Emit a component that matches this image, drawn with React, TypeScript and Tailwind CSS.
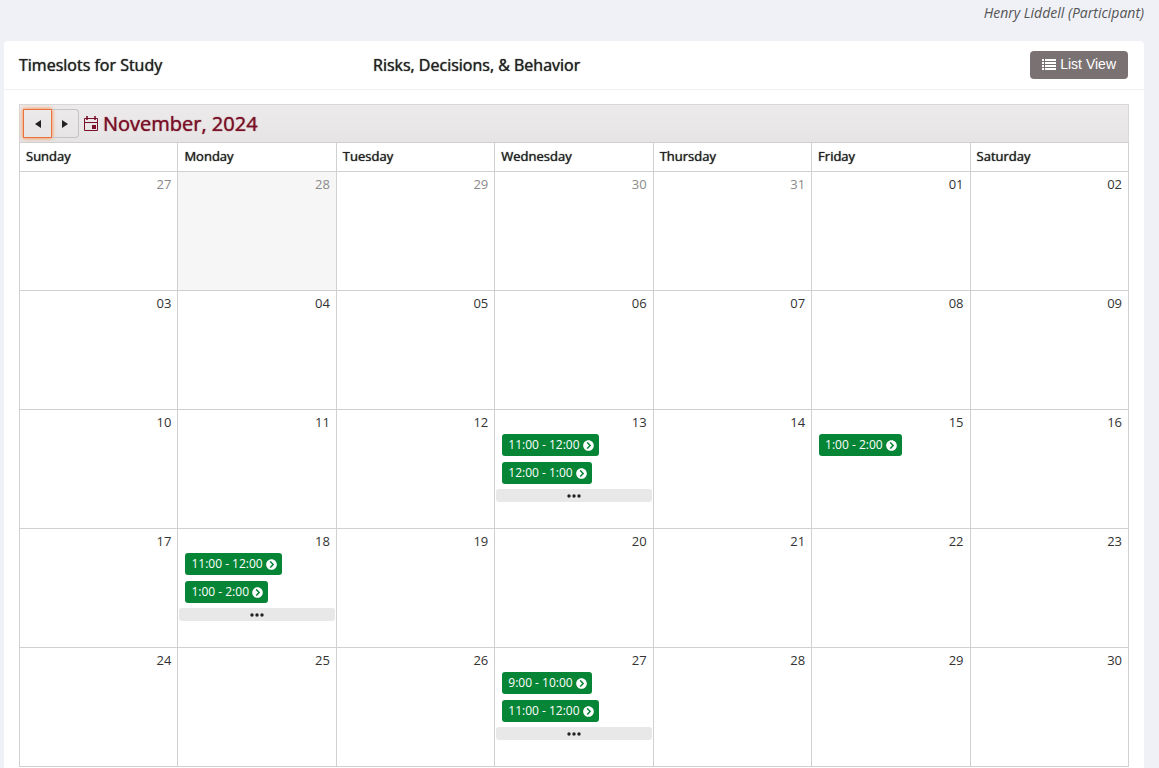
import React from 'react';
import { FaChevronCircleRight } from 'react-icons/fa';

type Day = {
  label: string;
  outside?: boolean;
  highlighted?: boolean;
  slots?: string[];
  more?: boolean;
};

const WEEKDAYS = ['Sunday', 'Monday', 'Tuesday', 'Wednesday', 'Thursday', 'Friday', 'Saturday'];

const WEEKS: Day[][] = [
  [
    { label: '27', outside: true },
    { label: '28', outside: true, highlighted: true },
    { label: '29', outside: true },
    { label: '30', outside: true },
    { label: '31', outside: true },
    { label: '01' },
    { label: '02' },
  ],
  [
    { label: '03' },
    { label: '04' },
    { label: '05' },
    { label: '06' },
    { label: '07' },
    { label: '08' },
    { label: '09' },
  ],
  [
    { label: '10' },
    { label: '11' },
    { label: '12' },
    { label: '13', slots: ['11:00 - 12:00', '12:00 - 1:00'], more: true },
    { label: '14' },
    { label: '15', slots: ['1:00 - 2:00'] },
    { label: '16' },
  ],
  [
    { label: '17' },
    { label: '18', slots: ['11:00 - 12:00', '1:00 - 2:00'], more: true },
    { label: '19' },
    { label: '20' },
    { label: '21' },
    { label: '22' },
    { label: '23' },
  ],
  [
    { label: '24' },
    { label: '25' },
    { label: '26' },
    { label: '27', slots: ['9:00 - 10:00', '11:00 - 12:00'], more: true },
    { label: '28' },
    { label: '29' },
    { label: '30' },
  ],
];

const ListIcon = () => (
  <svg viewBox="0 0 14 11" className="h-[11px] w-[14px] shrink-0" fill="currentColor" aria-hidden="true">
    {[0, 3, 6, 9].map((y) => (
      <g key={y}>
        <rect x="0" y={y} width="2" height="2" />
        <rect x="3" y={y} width="11" height="2" />
      </g>
    ))}
  </svg>
);

const CalendarIcon = () => (
  <svg viewBox="0 0 16 16" className="size-4 shrink-0" fill="none" stroke="currentColor" aria-hidden="true">
    <path d="M1.5 2.5h13v12h-13zM1.5 6.5h13" />
    <path d="M4 0v4M12 0v4" strokeWidth="1.6" />
    <path d="M9 9h4v4H9z" fill="currentColor" stroke="none" />
  </svg>
);

const DotsIcon = () => (
  <svg viewBox="0 0 14 4" className="h-1 w-[14px]" fill="currentColor" aria-hidden="true">
    <circle cx="2" cy="2" r="1.7" />
    <circle cx="7" cy="2" r="1.7" />
    <circle cx="12" cy="2" r="1.7" />
  </svg>
);

const Slot: React.FC<{ time: string }> = ({ time }) => (
  <a
    href="#"
    className="flex h-[22px] items-center gap-[3px] rounded-[3px] bg-[#078536] pr-[5px] pl-1.5 text-xs whitespace-nowrap text-white"
  >
    {time}
    <FaChevronCircleRight className="size-[11px]" />
  </a>
);

const DayCell: React.FC<{ day: Day }> = ({ day }) => (
  <td
    className={`h-[119px] border border-[#d0d0d0] p-0 align-top ${day.highlighted ? 'bg-[#f6f6f6]' : ''}`}
  >
    <div className={`pt-[3px] pr-1.5 text-right text-[13px] leading-[18px] ${day.outside ? 'text-[#8a8a8a]' : 'text-[#333]'}`}>
      {day.label}
    </div>
    {day.slots && (
      <div className="mt-[3px] flex flex-col items-start gap-1.5 pl-[7px]">
        {day.slots.map((time) => (
          <Slot key={time} time={time} />
        ))}
      </div>
    )}
    {day.more && (
      <button
        type="button"
        aria-label="More timeslots"
        className="mx-px mt-[5px] flex h-[13px] w-[calc(100%-2px)] items-center justify-center rounded-[3px] bg-[#e8e8e8] text-[#222]"
      >
        <DotsIcon />
      </button>
    )}
  </td>
);

const App: React.FC = () => {
  return (
    <div className="flex min-h-screen flex-col bg-[#f0f1f7] pr-[15px] pl-1 font-['Open_Sans','Noto_Sans',sans-serif] text-[#222]">
      <div className="h-[41px] pt-1 text-right text-sm leading-[18px] text-[#555] italic">
        Henry Liddell (Participant)
      </div>

      <main className="flex-1 rounded-t bg-white">
        <header className="flex h-[49px] items-center border-b border-[#f0f0f3] pr-4 pl-[15px]">
          <h1 className="w-[354px] text-base font-medium [text-shadow:0_0_1px_currentColor]">Timeslots for Study</h1>
          <h2 className="flex-1 text-base font-medium [text-shadow:0_0_1px_currentColor]">
            Risks, Decisions, &amp; Behavior
          </h2>
          <button
            type="button"
            className="flex h-7 items-center gap-1 rounded bg-[#7a7272] px-3 pb-0.5 font-['Liberation_Sans',Arial,sans-serif] text-sm text-white"
          >
            <ListIcon />
            List View
          </button>
        </header>

        <section className="pt-3.5 pr-[15px] pl-[15px]">
          <div className="flex h-[38px] items-center border border-b-0 border-[#d8d8d8] bg-linear-to-b from-[#eceaea] to-[#e6e4e4] pl-[3px]">
            <button
              type="button"
              aria-label="Previous month"
              className="flex h-[29px] w-[29px] items-center justify-center border border-[#e8743b] shadow-[0_0_4px_#ff7a33]"
            >
              <svg viewBox="0 0 6 8" className="h-2 w-1.5" fill="currentColor" aria-hidden="true">
                <path d="M6 0v8L0 4z" />
              </svg>
            </button>
            <button
              type="button"
              aria-label="Next month"
              className="flex h-[29px] w-[27px] items-center justify-center rounded-r border border-l-0 border-[#c4c4c4]"
            >
              <svg viewBox="0 0 6 8" className="h-2 w-1.5" fill="currentColor" aria-hidden="true">
                <path d="M0 0v8l6-4z" />
              </svg>
            </button>
            <div className="flex items-center gap-1 pl-1 text-xl font-medium text-[#7b1029]">
              <CalendarIcon />
              <span className="[text-shadow:0_0_1px_currentColor]">November, 2024</span>
            </div>
          </div>

          <table className="w-full table-fixed border-collapse">
            <thead>
              <tr>
                {WEEKDAYS.map((name) => (
                  <th
                    key={name}
                    scope="col"
                    className="h-[29px] border border-[#d0d0d0] px-1.5 py-0 text-left text-[13px] font-medium [text-shadow:0_0_1px_currentColor]"
                  >
                    {name}
                  </th>
                ))}
              </tr>
            </thead>
            <tbody>
              {WEEKS.map((week, index) => (
                <tr key={index}>
                  {week.map((day) => (
                    <DayCell key={day.label} day={day} />
                  ))}
                </tr>
              ))}
            </tbody>
          </table>
        </section>
      </main>
    </div>
  );
};

export default App;
